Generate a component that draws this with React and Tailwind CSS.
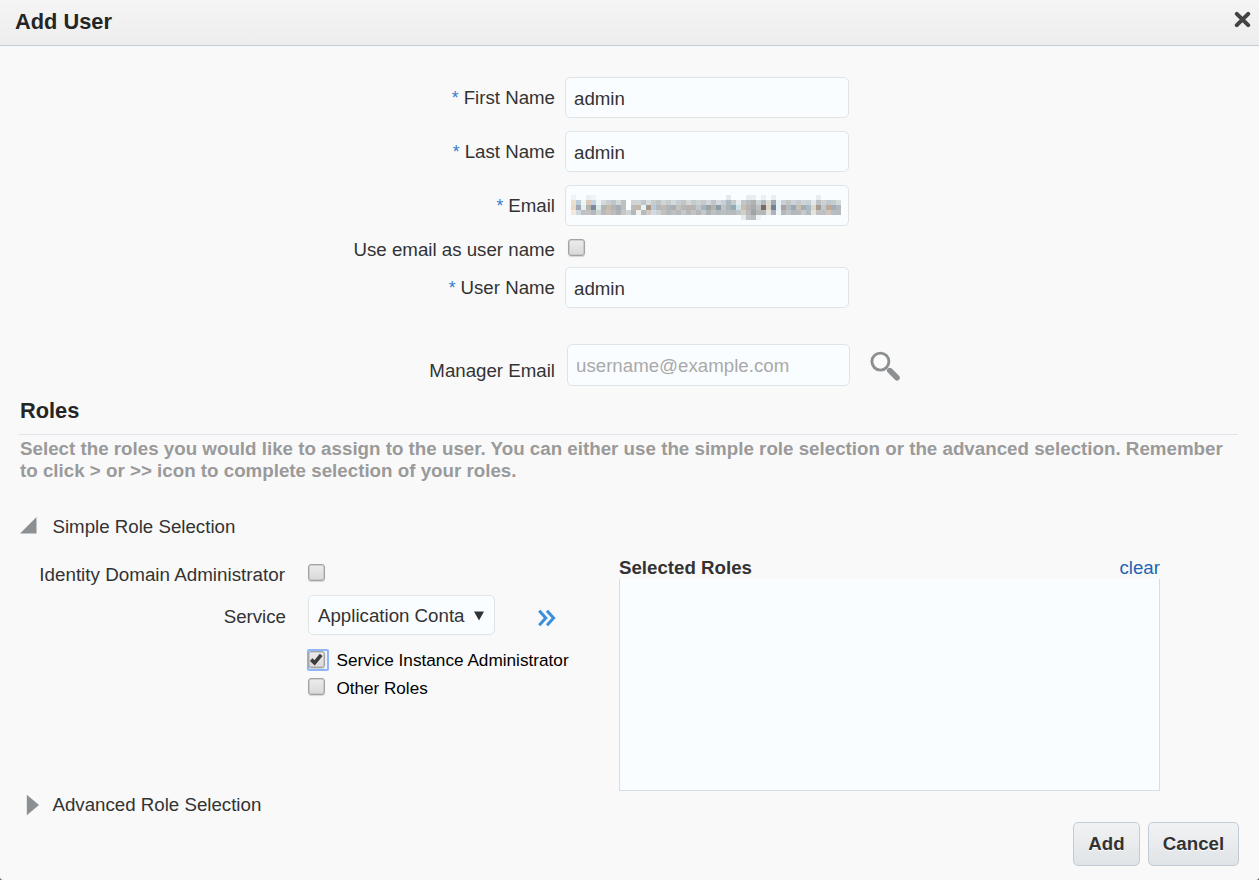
import React from "react";

const CELLS = [
  ["#eef3f5", "", "", "#e9eff2", "#eef5f7", "", "", "", "", "", "", "", "", "", "", "", "", "", "", "", "", "", "", "", "", "", "", "", "", "", "", "#e3eaee", "", "", "", "#e6ebed", "#e8eef0", "", "#e9f1f4", "", "#e6eff4", "", "", "", "", "", "", "", "", "#e6eef1", "", "", "", ""],
  ["#ecdfd0", "#bcccdc", "#eef5f7", "#d8c9ba", "#c2d3e1", "#eef4f6", "#d4dbdd", "#c8ced1", "#bdc6c9", "#d4d8da", "#bcc1c3", "#fbfdfe", "#ced3d5", "#d0d6d8", "#bdc7ce", "#d7dcde", "#c8ccce", "#bfc4c7", "#d1d5d7", "#c6cbcd", "#d4d9db", "#c7cdd0", "#c1c7c9", "#d4d8da", "#c5cacc", "#cdd3d5", "#c4c9cb", "#d2d7da", "#bfc6ca", "#d4dadd", "#c7d0d4", "#adb9c0", "#c7cbcd", "#e6ecee", "#c1c6c8", "#b7bcbe", "#aeb4b6", "#ced3d5", "#b4babc", "#e0ddd9", "#9fa9b4", "#eaf1f5", "#ccd0d2", "#c1c6c8", "#ccd2d6", "#c4cacd", "#d0d5d7", "#c7d0d5", "#e3e8ea", "#bcc1c4", "#d0d0ce", "#bfc8ce", "#c6cbcd", "#d4d9db"],
  ["#ead9c8", "#a2a9b6", "#e2efed", "#b4b4b1", "#7c899b", "#dfe8e9", "#aeb6bb", "#c9bbaa", "#b2b4b8", "#a8adb4", "#bcc0c2", "#ffffff", "#b9bdbf", "#c5b7a5", "#e2f5ff", "#a99787", "#bcc9d8", "#b5b9bc", "#c3bbb3", "#b0b5bb", "#a9afb6", "#c7c2bb", "#b3b8bc", "#bdb2a9", "#aeb7bd", "#c3c6c6", "#aab2bb", "#98a4aa", "#bab3a8", "#879eaa", "#c2c3c0", "#a9b4b8", "#94aab5", "#cce1e8", "#cabdab", "#b5b3b1", "#a9aaab", "#c0c1bf", "#756b69", "#e0d6c8", "#718297", "#e8f2f6", "#a3a5a8", "#b7b9ba", "#96abba", "#c7bfb4", "#a9acaf", "#a9bac9", "#ddd7ca", "#a99b90", "#b6cad7", "#bda995", "#a2aeba", "#b3b8bb"],
  ["#f3e9df", "#d0d7dd", "#bdc1c2", "#c3c2c1", "#b3b8bd", "#cfd3d5", "#b7bbbc", "#c9c1b8", "#b9bdbe", "#afb3b5", "#c2c7c8", "#d0d4d6", "#b3b9bb", "#f0f0ec", "#b5babc", "#d1cac2", "#d3dae0", "#cbd2d6", "#bfc0bf", "#b4b8ba", "#bcbfc0", "#b5b9ba", "#c4c8c9", "#b6b9ba", "#c0c4c6", "#b5b7b8", "#c3c8cb", "#adb2b4", "#bec0bf", "#b1babf", "#bcbfc0", "#b4bcbf", "#b7baba", "#bdc5c8", "#d3cec7", "#b8babb", "#a1a3a4", "#b5b8b9", "#b3b7b9", "#e5e3de", "#aab3bc", "#f0f4f5", "#b4b8b9", "#c0c3c5", "#b0b8bd", "#b7b9b9", "#c5c9cb", "#b3bbc1", "#e3e4e0", "#c1c0bd", "#b8c1c6", "#d0c5bb", "#b7bdc1", "#b8bcbe"],
  ["", "", "", "", "", "", "", "", "", "", "", "", "", "", "", "", "", "", "", "", "", "", "", "", "", "", "", "", "", "", "", "", "", "", "#e9eaeb", "#c0c4c6", "#b9bec0", "#edf3f5", "", "", "", "", "", "", "", "", "", "", "", "", "", "", "", ""],
];

function Mosaic() {
  return (
    <svg width="270" height="25" viewBox="0 0 270 25" shapeRendering="crispEdges" className="block" aria-hidden="true">
      {CELLS.map((row, r) =>
        row.map((c, i) => (c ? <rect key={r + "-" + i} x={i * 5} y={r * 5} width="5" height="5" fill={c} /> : null))
      )}
    </svg>
  );
}

function Box({ checked }) {
  const box = (
    <span className="block h-[17px] w-[17px] shrink-0 rounded-[3px] border border-[#a3a3a3] bg-linear-to-b from-[#ececec] to-[#d9d9d9] shadow-[0_1px_1px_rgba(0,0,0,0.14),inset_0_0_0_0.5px_#b5b5b5]">
      {checked && (
        <svg viewBox="0 0 15 15" width="15" height="15" className="block">
          <path d="M2.2 7.6 L5.6 10.9 L12.2 2.8" fill="none" stroke="#3c3c3c" strokeWidth="3.6" />
        </svg>
      )}
    </span>
  );
  if (!checked) return box;
  return (
    <span className="-mt-px -ml-px block h-[22px] w-[22px] shrink-0 rounded-[2px] border-2 border-[#8fb6f8] bg-[#eef3fb]">
      <span className="-ml-px block">{box}</span>
    </span>
  );
}

function Label({ required, children, className = "pt-px" }) {
  return (
    <div className={"w-[555px] shrink-0 text-right " + className}>
      {required && <span className="mr-[5px] text-[17.5px] leading-[20px] text-[#3a7bd0]">*</span>}
      {children}
    </div>
  );
}

function Field({ children }) {
  return (
    <div className="ml-[10px] flex h-[41px] w-[284px] items-center rounded-[5px] border border-[#dfe4e7] bg-[#fafdff] pt-[2px] pl-2">
      {children}
    </div>
  );
}

export default function App() {
  return (
    <div className="bg-[#555]">
      <div className="flex h-[880px] w-[1259px] flex-col overflow-hidden rounded-b-[3px] bg-[#f9f9f9] font-['Liberation_Sans',Arial,sans-serif] text-[18.7px] leading-[22px] text-[#333333]">
        <header className="flex h-[46px] shrink-0 items-start justify-between border-b border-[#c4ced7] bg-linear-to-b from-[#f5f5f5] to-[#ededed] pt-[10px] pr-[8px] pl-[15px]">
          <h1 className="text-[21.8px] leading-[24px] font-bold text-[#252525]">Add User</h1>
          <svg width="17" height="17" viewBox="0 0 17 17" className="mt-px">
            <path d="M2.8 2.8 L14.2 14.2 M14.2 2.8 L2.8 14.2" stroke="#444" strokeWidth="4" strokeLinecap="round" />
          </svg>
        </header>

        <section className="flex flex-col pt-[31px]">
          <div className="flex flex-col gap-[13px]">
            <div className="flex items-center">
              <Label required>First Name</Label>
              <Field>admin</Field>
            </div>
            <div className="flex items-center">
              <Label required>Last Name</Label>
              <Field>admin</Field>
            </div>
            <div className="flex items-center">
              <Label required>Email</Label>
              <div className="ml-[10px] h-[41px] w-[284px] rounded-[5px] border border-[#dfe4e7] bg-[#fafdff] pt-[9px] pl-[5px]">
                <Mosaic />
              </div>
            </div>
          </div>
          <div className="flex h-[41px] items-start pt-[13px]">
            <Label className="">Use email as user name</Label>
            <div className="ml-[13px]"><Box /></div>
          </div>
          <div className="flex items-center">
            <Label required>User Name</Label>
            <Field>admin</Field>
          </div>
          <div className="mt-9 flex h-[42px] items-start">
            <Label className="pt-[16px]">Manager Email</Label>
            <div className="ml-[12px] flex h-[42px] w-[283px] items-center rounded-[5px] border border-[#dfe4e7] bg-[#fafdff] pt-[2px] pl-2 text-[#a9a9a9]">
              username@example.com
            </div>
            <svg width="32" height="32" viewBox="0 0 32 32" className="mt-[7px] ml-[19px]">
              <circle cx="11.4" cy="10.6" r="8.5" fill="#fbfbfb" stroke="#8c9092" strokeWidth="2.9" />
              <path d="M20.8 19.6 L28 26.8" stroke="#8c9092" strokeWidth="5.6" strokeLinecap="round" />
            </svg>
          </div>
        </section>

        <section className="flex flex-col pt-[13px] pr-[21px] pl-[19px]">
          <h2 className="h-[35px] pl-px text-[21.8px] leading-[24px] font-bold text-[#252525]">Roles</h2>
          <div className="border-t border-[#dfe5ec] pt-[3px] pl-px text-[18.76px] font-bold text-[#9a9a9a]">
            <p className="whitespace-nowrap">Select the roles you would like to assign to the user. You can either use the simple role selection or the advanced selection. Remember</p>
            <p className="whitespace-nowrap">to click &gt; or &gt;&gt; icon to complete selection of your roles.</p>
          </div>
        </section>

        <div className="mt-[33px] flex h-[24px] items-start pl-[20px]">
          <svg width="17" height="17" viewBox="0 0 17 17" className="mt-[2px]"><path d="M0 16.5 L16.5 0 V16.5 Z" fill="#8c9092" /></svg>
          <span className="ml-[15.5px] pt-px">Simple Role Selection</span>
        </div>

        <section className="mt-[17px] flex h-[235px] shrink-0">
          <div className="flex w-[619px] flex-col">
            <div className="mt-[8px] flex h-[22px]">
              <div className="w-[285px] text-right text-[18.82px]">Identity Domain Administrator</div>
              <div className="ml-[23px]"><Box /></div>
            </div>
            <div className="mt-[9px] flex h-[40px]">
              <div className="w-[286px] pt-[11px] text-right">Service</div>
              <div className="ml-[22px] flex h-[40px] w-[187px] items-center rounded-[5px] border border-[#dfe4e7] bg-[#fafdff] pl-[9px]">
                <span className="w-[146px] pt-[2px] whitespace-nowrap">Application Conta</span>
                <svg width="10" height="10" viewBox="0 0 10 10" className="mt-px ml-[10px]"><path d="M0 0.5 H10 L5 9.5 Z" fill="#333" /></svg>
              </div>
              <svg width="18" height="18" viewBox="0 0 18 18" className="mt-[14px] ml-[43px]">
                <path d="M1.2 1.7 L7.8 9 L1.2 16.3 M9 1.7 L15.6 9 L9 16.3" fill="none" stroke="#3a8fda" strokeWidth="3" />
              </svg>
            </div>
            <div className="mt-[15px] flex h-[28px] pl-[308px] text-[17.2px] leading-[20px] text-black">
              <Box checked />
              <span className="ml-[7.5px]">Service Instance Administrator</span>
            </div>
            <div className="flex h-[28px] pl-[308px] text-[17.1px] leading-[20px] text-black">
              <Box />
              <span className="ml-[11.5px] pt-px">Other Roles</span>
            </div>
          </div>
          <div className="flex w-[541px] flex-col">
            <div className="flex h-[23px] justify-between pt-px">
              <span className="font-bold">Selected Roles</span>
              <span className="text-[#1f63b5]">clear</span>
            </div>
            <div className="flex-1 border-x border-b border-[#d5dee6] bg-[#fafdff]" />
          </div>
        </section>

        <div className="mt-[1px] flex h-[26px] items-center pl-[26px]">
          <svg width="14" height="22" viewBox="0 0 14 22"><path d="M0.8 0.8 L13 11 L0.8 21.2 Z" fill="#8c9092" /></svg>
          <span className="ml-[12.5px]">Advanced Role Selection</span>
        </div>

        <footer className="mt-[4px] flex justify-end gap-2 pr-5">
          <button className="h-[44px] w-[67px] rounded-[5px] border border-[#c1ccd6] bg-linear-to-b from-[#f1f2f3] to-[#e0e4e7] font-bold text-[#333] [text-shadow:0_1px_0_#fff]">Add</button>
          <button className="h-[44px] w-[91px] rounded-[5px] border border-[#c1ccd6] bg-linear-to-b from-[#f1f2f3] to-[#e0e4e7] font-bold text-[#333] [text-shadow:0_1px_0_#fff]">Cancel</button>
        </footer>
      </div>
    </div>
  );
}
